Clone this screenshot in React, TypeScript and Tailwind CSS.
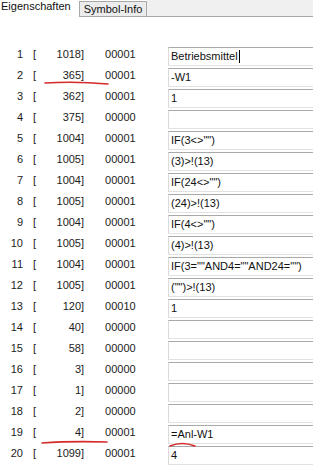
import React from "react";

const rows: [number, string, string, string][] = [
  [1, "1018", "00001", "Betriebsmittel"],
  [2, "365", "00001", "-W1"],
  [3, "362", "00001", "1"],
  [4, "375", "00000", ""],
  [5, "1004", "00001", 'IF(3<>"")'],
  [6, "1005", "00001", "(3)>!(13)"],
  [7, "1004", "00001", 'IF(24<>"")'],
  [8, "1005", "00001", "(24)>!(13)"],
  [9, "1004", "00001", 'IF(4<>"")'],
  [10, "1005", "00001", "(4)>!(13)"],
  [11, "1004", "00001", 'IF(3=""AND4=""AND24="")'],
  [12, "1005", "00001", '("")>!(13)'],
  [13, "120", "00010", "1"],
  [14, "40", "00000", ""],
  [15, "58", "00000", ""],
  [16, "3", "00000", ""],
  [17, "1", "00000", ""],
  [18, "2", "00000", ""],
  [19, "4", "00001", "=Anl-W1"],
  [20, "1099", "00001", "4"],
];

export default function App() {
  return (
    <div
      className="relative w-[313px] h-[471px] overflow-hidden bg-white text-[#1c1c1c]"
      style={{ fontFamily: '"Liberation Sans", Arial, sans-serif' }}
    >
      {/* Tab bar */}
      <div className="flex h-[17px] items-stretch text-[11px]">
        <div className="bg-white pl-[1px] pr-[8px] leading-[13px] text-[#111]">Eigenschaften</div>
        <div className="mt-[1px] border border-[#a8a8a8] bg-[#ececec] px-[4px] leading-[14px] text-[#111]">
          Symbol-Info
        </div>
        <div className="flex-1 border-b border-[#a8a8a8] bg-[#f0f0f0]" />
      </div>

      {/* Rows */}
      <div className="mt-[30px] flex flex-col">
        {rows.map(([n, v, code, text]) => (
          <div key={n} className="flex h-[21px] text-[11px]">
            <div className="flex h-[15px] w-[168px] items-center">
              <span className="w-[23px] text-right">{n}</span>
              <span className="ml-[10px]">[</span>
              <span className="w-[48px] text-right">{v}]</span>
              <span className="ml-[21px]">{code}</span>
            </div>
            <div className="flex h-[19px] flex-1 items-center border-t border-l border-b border-t-[#a9a9a9] border-l-[#dadada] border-b-[#e2e2e2] pl-[2px] text-[11px] text-[#111] whitespace-pre">
              {text}
              {n === 1 && <span className="ml-[1px] inline-block h-[13px] w-[1px] bg-black" />}
            </div>
          </div>
        ))}
      </div>

      {/* red annotations */}
      <svg className="pointer-events-none absolute left-0 top-0" width="313" height="471">
        <path d="M45 83 Q75 81 108 84" stroke="#d42a2a" strokeWidth="1.6" fill="none" strokeLinecap="round" />
        <path d="M42 443 Q70 441 107 442" stroke="#d42a2a" strokeWidth="1.6" fill="none" strokeLinecap="round" />
        <path d="M170 446 Q182 441 195 446" stroke="#d42a2a" strokeWidth="1.6" fill="none" strokeLinecap="round" />
      </svg>
    </div>
  );
}
